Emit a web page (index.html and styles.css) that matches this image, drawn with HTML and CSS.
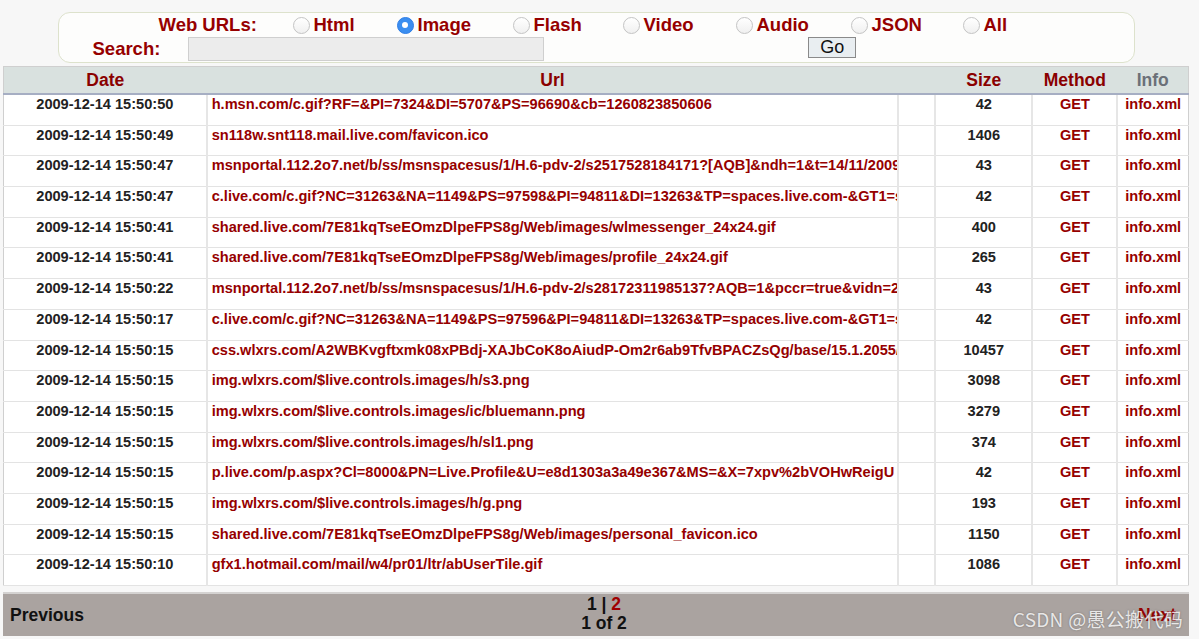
FILE: index.html
```html
<!DOCTYPE html>
<html>
<head>
<meta charset="utf-8">
<link rel="stylesheet" href="styles.css">
</head>
<body>
<div class="page">
  <form class="filter">
    <div class="filter-row types">
      <span class="lbl">Web URLs:</span>
      <label class="opt"><span class="radio"></span>Html</label>
      <label class="opt"><span class="radio on"></span>Image</label>
      <label class="opt"><span class="radio"></span>Flash</label>
      <label class="opt"><span class="radio"></span>Video</label>
      <label class="opt"><span class="radio"></span>Audio</label>
      <label class="opt"><span class="radio"></span>JSON</label>
      <label class="opt"><span class="radio"></span>All</label>
    </div>
    <div class="filter-row search">
      <span class="lbl">Search:</span>
      <span class="input"></span>
      <span class="go">Go</span>
    </div>
  </form>

  <table class="grid">
    <colgroup>
      <col class="c-date"><col class="c-url"><col class="c-gap"><col class="c-size"><col class="c-method"><col class="c-info">
    </colgroup>
    <thead>
      <tr><th>Date</th><th>Url</th><th></th><th>Size</th><th>Method</th><th class="info-h">Info</th></tr>
    </thead>
    <tbody>
      <tr><td class="d">2009-12-14 15:50:50</td><td class="u">h.msn.com/c.gif?RF=&amp;PI=7324&amp;DI=5707&amp;PS=96690&amp;cb=1260823850606</td><td></td><td class="s">42</td><td class="m">GET</td><td class="i">info.xml</td></tr>
      <tr><td class="d">2009-12-14 15:50:49</td><td class="u">sn118w.snt118.mail.live.com/favicon.ico</td><td></td><td class="s">1406</td><td class="m">GET</td><td class="i">info.xml</td></tr>
      <tr><td class="d">2009-12-14 15:50:47</td><td class="u">msnportal.112.2o7.net/b/ss/msnspacesus/1/H.6-pdv-2/s2517528184171?[AQB]&amp;ndh=1&amp;t=14/11/2009%2015%3A50%3A47</td><td></td><td class="s">43</td><td class="m">GET</td><td class="i">info.xml</td></tr>
      <tr><td class="d">2009-12-14 15:50:47</td><td class="u">c.live.com/c.gif?NC=31263&amp;NA=1149&amp;PS=97598&amp;PI=94811&amp;DI=13263&amp;TP=spaces.live.com-&amp;GT1=spaces</td><td></td><td class="s">42</td><td class="m">GET</td><td class="i">info.xml</td></tr>
      <tr><td class="d">2009-12-14 15:50:41</td><td class="u">shared.live.com/7E81kqTseEOmzDlpeFPS8g/Web/images/wlmessenger_24x24.gif</td><td></td><td class="s">400</td><td class="m">GET</td><td class="i">info.xml</td></tr>
      <tr><td class="d">2009-12-14 15:50:41</td><td class="u">shared.live.com/7E81kqTseEOmzDlpeFPS8g/Web/images/profile_24x24.gif</td><td></td><td class="s">265</td><td class="m">GET</td><td class="i">info.xml</td></tr>
      <tr><td class="d">2009-12-14 15:50:22</td><td class="u">msnportal.112.2o7.net/b/ss/msnspacesus/1/H.6-pdv-2/s28172311985137?AQB=1&amp;pccr=true&amp;vidn=2</td><td></td><td class="s">43</td><td class="m">GET</td><td class="i">info.xml</td></tr>
      <tr><td class="d">2009-12-14 15:50:17</td><td class="u">c.live.com/c.gif?NC=31263&amp;NA=1149&amp;PS=97596&amp;PI=94811&amp;DI=13263&amp;TP=spaces.live.com-&amp;GT1=spaces</td><td></td><td class="s">42</td><td class="m">GET</td><td class="i">info.xml</td></tr>
      <tr><td class="d">2009-12-14 15:50:15</td><td class="u">css.wlxrs.com/A2WBKvgftxmk08xPBdj-XAJbCoK8oAiudP-Om2r6ab9TfvBPACZsQg/base/15.1.2055/Base.css</td><td></td><td class="s">10457</td><td class="m">GET</td><td class="i">info.xml</td></tr>
      <tr><td class="d">2009-12-14 15:50:15</td><td class="u">img.wlxrs.com/$live.controls.images/h/s3.png</td><td></td><td class="s">3098</td><td class="m">GET</td><td class="i">info.xml</td></tr>
      <tr><td class="d">2009-12-14 15:50:15</td><td class="u">img.wlxrs.com/$live.controls.images/ic/bluemann.png</td><td></td><td class="s">3279</td><td class="m">GET</td><td class="i">info.xml</td></tr>
      <tr><td class="d">2009-12-14 15:50:15</td><td class="u">img.wlxrs.com/$live.controls.images/h/sl1.png</td><td></td><td class="s">374</td><td class="m">GET</td><td class="i">info.xml</td></tr>
      <tr><td class="d">2009-12-14 15:50:15</td><td class="u">p.live.com/p.aspx?Cl=8000&amp;PN=Live.Profile&amp;U=e8d1303a3a49e367&amp;MS=&amp;X=7xpv%2bVOHwReigU</td><td></td><td class="s">42</td><td class="m">GET</td><td class="i">info.xml</td></tr>
      <tr><td class="d">2009-12-14 15:50:15</td><td class="u">img.wlxrs.com/$live.controls.images/h/g.png</td><td></td><td class="s">193</td><td class="m">GET</td><td class="i">info.xml</td></tr>
      <tr><td class="d">2009-12-14 15:50:15</td><td class="u">shared.live.com/7E81kqTseEOmzDlpeFPS8g/Web/images/personal_favicon.ico</td><td></td><td class="s">1150</td><td class="m">GET</td><td class="i">info.xml</td></tr>
      <tr><td class="d">2009-12-14 15:50:10</td><td class="u">gfx1.hotmail.com/mail/w4/pr01/ltr/abUserTile.gif</td><td></td><td class="s">1086</td><td class="m">GET</td><td class="i">info.xml</td></tr>
    </tbody>
  </table>

  <div class="pager">
    <span class="prev">Previous</span>
    <div class="pages">
      <div>1 | <span class="red">2</span></div>
      <div>1 of 2</div>
    </div>
    <span class="next">Next</span>
    <span class="watermark">CSDN @愚公搬代码</span>
  </div>
</div>
</body>
</html>
```

FILE: styles.css
```css
html, body {
  margin: 0;
  padding: 0;
  background: #f7f7f7;
}

body {
  font-family: "Liberation Sans", Arial, Helvetica, sans-serif;
}

.page {
  width: 1186px;
  margin-left: 3px;
  padding-top: 12px;
}

/* ---------- filter form ---------- */
.filter {
  box-sizing: border-box;
  width: 1077px;
  height: 51px;
  margin: 0 auto;
  border: 1px solid #dde2cc;
  border-radius: 12px;
  background: #fdfdfc;
  display: flex;
  flex-direction: column;
}

.filter-row {
  height: 24px;
  display: flex;
  align-items: center;
}

.lbl {
  color: #960000;
  font-weight: bold;
  font-size: 18.5px;
}

.types {
  display: grid;
  grid-template-columns: 134px 104px 116px 110px 113px 115px 112px auto;
  padding-left: 100px;
  align-items: center;
}

.opt {
  display: flex;
  align-items: center;
  gap: 4px;
  color: #960000;
  font-weight: bold;
  font-size: 18.5px;
}

.radio {
  box-sizing: border-box;
  width: 17px;
  height: 17px;
  border-radius: 50%;
  border: 1px solid #c4c4c4;
  background: linear-gradient(#ffffff, #f0f0f0);
  display: flex;
  align-items: center;
  justify-content: center;
}

.radio.on {
  border-color: #2f7fe6;
  background: #3b8ef0;
}

.radio.on::after {
  content: "";
  width: 6px;
  height: 6px;
  border-radius: 50%;
  background: #fff;
}

.search {
  padding-left: 34px;
}

.input {
  box-sizing: border-box;
  width: 356px;
  height: 24px;
  margin-left: 28px;
  background: #ececec;
  border: 1px solid #cfcfcf;
}

.go {
  box-sizing: border-box;
  width: 48px;
  height: 21px;
  margin-left: 264px;
  align-self: flex-start;
  background: #e9eef1;
  border: 1px solid #8a8a8a;
  font-size: 18px;
  line-height: 19px;
  text-align: center;
  color: #111;
}

/* ---------- table ---------- */
.grid {
  width: 1186px;
  margin-top: 3px;
  border-collapse: collapse;
  table-layout: fixed;
  background: #fff;
  border: 1px solid #cfcfcf;
}

.c-date { width: 203px; }
.c-url { width: 691px; }
.c-gap { width: 37px; }
.c-size { width: 97px; }
.c-method { width: 85px; }
.c-info { width: 71px; }

thead th {
  height: 26px;
  padding: 0;
  background: #d9e1df;
  border-bottom: 2px solid #a6aec3;
  color: #8a0000;
  font-size: 17.5px;
  font-weight: bold;
  text-align: center;
  line-height: 26px;
}

thead th.info-h {
  color: #6b7078;
}

tbody td {
  height: 29.7px;
  padding: 0;
  vertical-align: top;
  border-right: 2px solid #e6e6e6;
  border-bottom: 1px solid #e3e3e3;
  font-size: 14.6px;
  font-weight: bold;
  line-height: 18px;
  white-space: nowrap;
  overflow: hidden;
}

tbody td:last-child {
  border-right: none;
}

td.d {
  text-align: center;
  color: #222;
}

td.u {
  color: #960000;
  padding-left: 4px;
  text-overflow: clip;
}

td.s {
  text-align: center;
  color: #222;
}

td.m {
  text-align: center;
  color: #960000;
}

td.i {
  text-align: center;
  color: #960000;
}

/* ---------- pager ---------- */
.pager {
  position: relative;
  box-sizing: border-box;
  width: 1186px;
  height: 44px;
  margin-top: 6px;
  background: #aaa3a0;
  border-top: 2px solid #d4d2d1;
  display: flex;
  align-items: center;
  justify-content: space-between;
  padding: 0 13px 0 7px;
  font-weight: bold;
  font-size: 17.5px;
  color: #111;
}

.prev {
  width: 142px;
}

.pages {
  text-align: center;
  line-height: 19px;
  margin-top: -2px;
}

.pages .red {
  color: #a00000;
}

.next {
  width: 120px;
  text-align: right;
  color: #960000;
}

.watermark {
  position: absolute;
  right: 6px;
  bottom: 4px;
  font-family: "Noto Sans CJK SC", "Noto Sans", sans-serif;
  font-weight: normal;
  font-size: 19px;
  color: rgba(255, 255, 255, 0.82);
  text-shadow: 0 0 2px rgba(80, 80, 80, 0.6);
  letter-spacing: 0.3px;
}
```
